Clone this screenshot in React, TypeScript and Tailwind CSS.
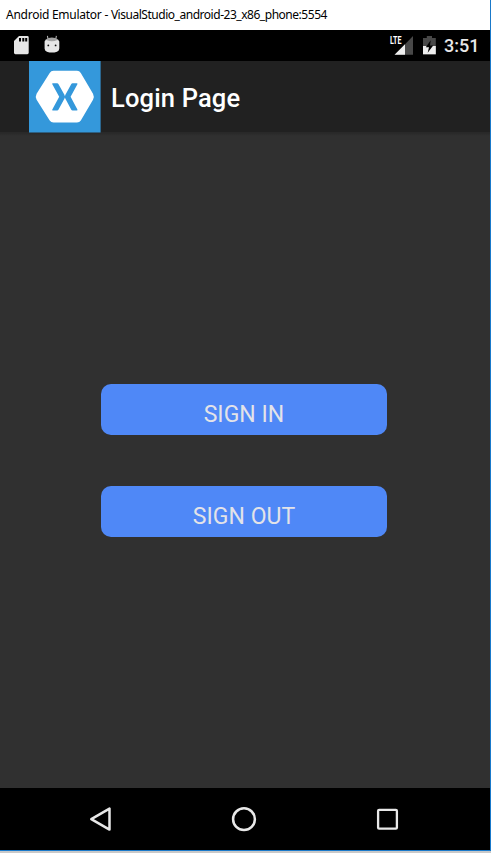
import React from 'react';

function StatusBar() {
  return (
    <div className="flex h-[31px] items-start bg-black">
      <svg className="mt-[6px] ml-[14px] h-[19px] w-[15px]" viewBox="0 0 15 19">
        <path d="M5 0H13.3Q14.7 0 14.7 1.4V16.8Q14.7 18.2 13.3 18.2H1.4Q0 18.2 0 16.8V5Z" fill="#e6e6e6" />
        <path d="M5 2h2v3.4H5zM8.3 2h2v3.4h-2zM11.2 2h2v3.4h-2z" fill="#000" />
      </svg>
      <svg className="mt-[5px] ml-[15px] h-[19px] w-[17px]" viewBox="0 0 17 19">
        <path d="M3.4 .8L4 4M12.4 .8L11.8 4" stroke="#b0b0b0" strokeWidth="1.1" />
        <path d="M1.6 7.5V4.4Q4.5 2.4 7.9 2.4T14.2 4.4V7.5Z" fill="#a3a3a3" />
        <path d="M.6 6.6Q.6 5 2.4 5Q7.9 7.6 13.4 5Q15.3 5 15.3 6.6V13.6Q15.3 16 13 16.7Q10.4 17.6 7.9 17.6T2.9 16.7Q.6 16 .6 13.6Z" fill="#e6e6e6" />
        <circle cx="4.3" cy="10.4" r=".9" fill="#111" />
        <circle cx="11.6" cy="10.4" r=".9" fill="#111" />
      </svg>
      <div className="grow" />
      <svg className="mt-[3px] h-[23px] w-[24px] overflow-visible" viewBox="0 -2 24 23">
        <path d="M23 1V19.8H5Z" fill="#484848" />
        <path d="M15 9.3V19.8H4.5Z" fill="#eee" />
        <text x="0" y="9.3" textLength="11.5" lengthAdjust="spacingAndGlyphs" fontFamily="Roboto, sans-serif" fontWeight="700" fontSize="11" fill="#fff">LTE</text>
      </svg>
      <svg className="mt-[6px] ml-[9px] h-[19px] w-[13px]" viewBox="0 0 13 19">
        <path d="M0 2H3.8V0H9V2H12.8V18.3H0Z" fill="#484848" />
        <path d="M0 10H12.8V18.3H0Z" fill="#eee" />
        <path d="M7.7 4.2L2.8 11.2H6L4.7 16.8L10.2 9.4H7Z" fill="#000" />
      </svg>
      <span className="mt-[4px] mr-[11px] ml-[8px] w-[35px] text-[18px] leading-[24px] font-medium whitespace-nowrap text-[#e8e8e8]">3:51</span>
    </div>
  );
}

function ActionBar() {
  return (
    <header className="flex h-[72px] border-b border-[#292929] bg-[#212121] pl-[29px]">
      <svg className="h-[72px] w-[72px] shrink-0" viewBox="0 0 72 72">
        <path d="M0 0H71.6V71.6H0Z" fill="#3498db" />
        <path d="M24.5 9.8H48Q50.5 9.8 51.8 12L64 32.8Q65.6 35.8 64 38.8L51.8 59.4Q50.5 61.5 48 61.5H24.5Q22 61.5 20.7 59.4L7.6 38.8Q6 35.8 7.6 32.8L20.7 12Q22 9.8 24.5 9.8Z" fill="#fff" />
        <path d="M23.8 22.2H28.2Q29 22.2 29.4 22.9L35.4 33.8L35.9 35.2L36.4 33.8L42.3 22.9Q42.7 22.2 43.5 22.2H47.8Q48.8 22.2 48.4 23.2L41.6 35.8L48.4 48.4Q48.8 49.4 47.8 49.4H43.5Q42.7 49.4 42.3 48.7L36.4 37.8L35.9 36.4L35.4 37.8L29.4 48.7Q29 49.4 28.2 49.4H23.8Q22.8 49.4 23.3 48.4L30.2 35.8L23.3 23.2Q22.8 22.2 23.8 22.2Z" fill="#3498db" />
      </svg>
      <h1 className="ml-[10px] text-[25.5px] leading-[74px] font-medium tracking-[0.15px] whitespace-nowrap text-white">Login Page</h1>
    </header>
  );
}

function ActionButton({ label }: { label: string }) {
  return (
    <button className="h-[51px] w-[286px] rounded-[10px] bg-[#4f88f7] pt-[9px] text-[23px] leading-[42px] tracking-[0.04px] text-[#e3e3e8]">
      <span className="block translate-y-px">{label}</span>
    </button>
  );
}

function NavigationBar() {
  return (
    <nav className="flex h-[62px] items-center bg-black pl-[88px]">
      <svg className="h-[28px] w-[28px]" viewBox="0 0 28 28" fill="none" stroke="#e8e8e8" strokeWidth="2.5" strokeLinejoin="round">
        <path d="M21.5 3.6V24.6L3.3 14.1Z" />
      </svg>
      <svg className="ml-[114px] h-[28px] w-[28px]" viewBox="0 0 28 28" fill="none" stroke="#e8e8e8" strokeWidth="2.5">
        <circle cx="14" cy="14.2" r="10.9" />
      </svg>
      <svg className="ml-[115px] h-[28px] w-[28px]" viewBox="0 0 28 28" fill="none" stroke="#e8e8e8" strokeWidth="2.3">
        <rect x="5.1" y="4.9" width="18.8" height="18.8" rx="1" />
      </svg>
    </nav>
  );
}

export default function App() {
  return (
    <div className="flex h-[853px] w-[491px] flex-col overflow-hidden bg-white font-['Roboto',sans-serif]">
      <div className="flex h-[851px] flex-col border-b border-[#1979ca]">
        <div className="flex grow flex-col">
          <div className="h-[30px] border-r border-[#1979ca] bg-white pl-[6px] font-['Noto_Sans',sans-serif] text-[12px] leading-[30px] tracking-[-0.26px] whitespace-nowrap text-black">
            Android Emulator - <span className="tracking-[-0.47px]">VisualStudio_android-23_x86_phone:5554</span>
          </div>
          <div className="flex grow flex-col border-r border-[#1979ca] bg-[#303030]">
            <StatusBar />
            <ActionBar />
            <div className="h-[3px] bg-linear-to-b from-[#292929] to-[#303030]" />
            <main className="flex grow flex-col items-center gap-[51px] pt-[248px] pr-[2px]">
              <ActionButton label="SIGN IN" />
              <ActionButton label="SIGN OUT" />
            </main>
            <NavigationBar />
          </div>
        </div>
      </div>
      <div className="h-[2px] bg-[#c9c9c9]" />
    </div>
  );
}
